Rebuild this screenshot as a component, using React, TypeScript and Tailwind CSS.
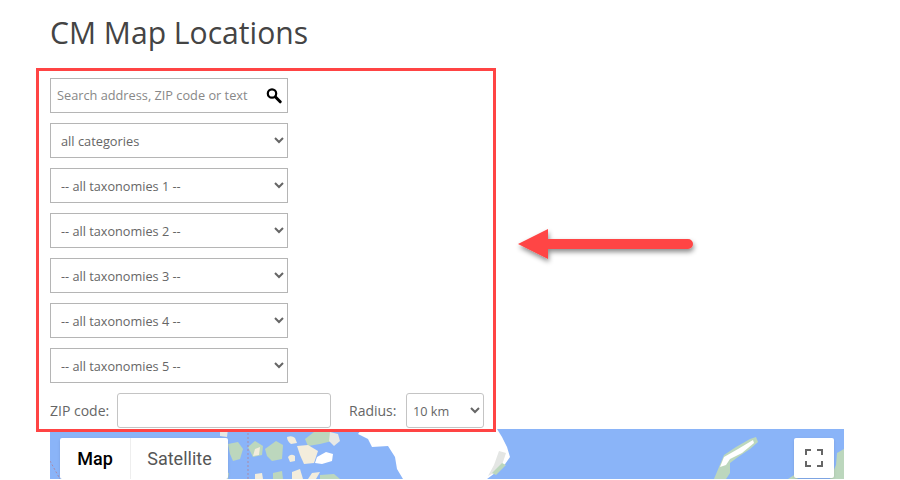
const taxonomies = [1, 2, 3, 4, 5];

const MapArt = () => (
  <svg className="absolute inset-0 h-full w-full" viewBox="0 0 794 50">
    <defs>
      <filter id="soft">
        <feGaussianBlur stdDeviation="0.6" />
      </filter>
    </defs>
    <rect width="794" height="50" fill="#8ab4f8" />
    <g filter="url(#soft)">
      {/* arctic islands */}
      <g fill="#bcd7bd">
        <path d="M178 15 L188 13 L193 20 L190 30 L183 32 L180 25 Z" />
        <path d="M198 18 L205 12 L213 17 L212 26 L203 28 Z" />
        <path d="M215 20 L226 12 L233 16 L232 30 L222 32 L217 27 Z" />
        <path d="M255 10 L264 3 L280 2 L282 12 L270 15 L258 17 Z" />
        <path d="M170 42 L179 44 L178 50 H170 Z" />
        <path d="M223 44 L232 42 L233 50 H223 Z" />
        <path d="M270 46 L284 45 L290 50 H270 Z" />
      </g>
      <path d="M170 0 H178 L177 8 L170 7 Z" fill="#e7e9e6" />
      <path d="M280 3 L288 5 L290 12 L284 17 L279 12 Z" fill="#e7e9e6" />
      <g fill="#f3eddc">
        <path d="M205 20 L210 18 L209 26 L203 27 Z" />
        <path d="M237 8 Q242 6 245 9 L247 14 L241 15 Q237 12 237 8 Z" />
        <path d="M238 28 Q241 24 245 27 L245 32 L240 33 Z" />
        <path d="M247 17 L258 16 L268 22 L264 34 L254 35 L250 26 Z" />
        <path d="M205 45 L212 44 L213 50 H205 Z" />
        <path d="M242 43 L250 40 L253 50 H242 Z" />
        <path d="M258 50 L262 44 L270 43 L266 50 Z" />
      </g>
      <path d="M267 28 L276 23 L283 25 L282 32 L272 35 L265 34 Z" fill="#fff" />
      {/* greenland */}
      <path
        d="M312 0 H447 L452 8 L457 18 L460 28 L453 38 L445 44 L437 50 H353 L347 40 L345 28 L338 17 L322 18 L318 10 L308 5 Z"
        fill="#fff"
      />
      <path d="M449 22 L456 24 L452 36 L444 44 L438 47 L444 36 Z" fill="#e4e6e4" />
      <path d="M452 34 L456 36 L446 46 L442 44 Z" fill="#bcd7bd" />
      {/* baffin side */}
      <path d="M664 50 L669 38 L674 26 L686 18 L700 10 L706 8 L708 13 L700 20 L688 28 L680 34 L680 44 L676 50 Z" fill="#bcd7bd" />
      <path d="M670 38 L674 28 L688 20 L703 11 L704 14 L692 24 L680 30 L676 36 Z" fill="#fff" />
      <path d="M738 50 L744 46 L748 50 Z" fill="#bcd7bd" />
      <path d="M787 24 L794 20 V50 H780 L786 36 Z" fill="#bcd7bd" />
    </g>
    <path d="M198 0 V50" stroke="#a98aa8" strokeWidth="1" strokeDasharray="2 2" />
    <path d="M0 32 L10 50" stroke="#a98aa8" strokeWidth="1" strokeDasharray="2 2" />
  </svg>
);

export default function App() {
  return (
    <div className="relative h-[480px] w-[900px] overflow-hidden bg-white font-['Open_Sans',sans-serif] text-[#666]">
      <div className="flex h-full flex-col px-[50px]">
        <h1 className="mt-[13px] h-[40px] text-[30.1px] leading-[40px] text-[#444]">CM Map Locations</h1>

        <form className="mt-[25px] flex flex-col gap-[10px]">
          <div className="relative h-[35px] w-[238px]">
            <input
              type="text"
              placeholder="Search address, ZIP code or text"
              className="h-full w-full border border-[#b5b5b5] pb-[2px] pl-[6px] pr-8 text-[12.75px] outline-none placeholder:text-[#888]"
            />
            <svg className="absolute right-[6px] top-[9px]" width="16" height="17" viewBox="0 0 16 17" fill="none" stroke="#000">
              <circle cx="6" cy="6.5" r="4.2" strokeWidth="2.2" />
              <path d="M9.5 10 L14.2 14.8" strokeWidth="3" strokeLinecap="round" />
            </svg>
          </div>

          <select className="h-[35px] w-[238px] border border-[#b5b5b5] bg-white pl-[6px] text-[12.8px] text-[#666]">
            <option>all categories</option>
          </select>

          {taxonomies.map((n) => (
            <select key={n} className="h-[35px] w-[238px] border border-[#b5b5b5] bg-white pl-[6px] text-[12.7px] text-[#666]">
              <option>-- all taxonomies {n} --</option>
            </select>
          ))}

          <div className="flex h-[35px] w-[434px] items-center text-[14px]">
            <label className="w-[67px]">ZIP code:</label>
            <input type="text" className="h-full w-[214px] rounded-[3px] border border-[#c4c4c4] outline-none" />
            <label className="ml-[18px] w-[57px]">Radius:</label>
            <select className="h-full w-[78px] rounded-[3px] border border-[#c4c4c4] bg-white pl-[2px] text-[12.7px] text-[#666]">
              <option>10 km</option>
            </select>
          </div>
        </form>

        <div className="relative mt-px h-[50px] w-[794px] shrink-0 overflow-hidden">
          <MapArt />
          <div className="absolute left-[10px] top-[9px] flex h-[41px] rounded-[2px] bg-white font-['Roboto',sans-serif] text-[18px] shadow">
            <span className="flex w-[70px] items-center justify-center font-medium text-black">Map</span>
            <span className="flex w-[98px] items-center justify-center border-l border-[#eee] text-[#565656]">Satellite</span>
          </div>
          <div className="absolute left-[744px] top-[9px] flex h-[40px] w-[40px] items-center justify-center rounded-[2px] bg-white shadow">
            <svg width="18" height="18" viewBox="0 0 18 18" fill="none" stroke="#666" strokeWidth="2">
              <path d="M1 6V1h5M12 1h5v5M17 12v5h-5M6 17H1v-5" />
            </svg>
          </div>
        </div>
      </div>

      {/* annotation */}
      <div className="pointer-events-none absolute left-[36px] top-[68px] h-[364px] w-[460px] border-[3px] border-[#ff4444]" />
      <svg className="pointer-events-none absolute left-[510px] top-[220px] overflow-visible" width="200" height="50" viewBox="0 0 200 50">
        <defs>
          <filter id="arrow-shadow" x="-10%" y="-50%" width="120%" height="220%">
            <feDropShadow dx="1" dy="3" stdDeviation="2.5" floodColor="#000" floodOpacity="0.45" />
          </filter>
        </defs>
        <path d="M8 24 L38 9 V19 H178 a5 5 0 0 1 0 10 H38 V39 Z" fill="#ff4444" filter="url(#arrow-shadow)" />
      </svg>
    </div>
  );
}
